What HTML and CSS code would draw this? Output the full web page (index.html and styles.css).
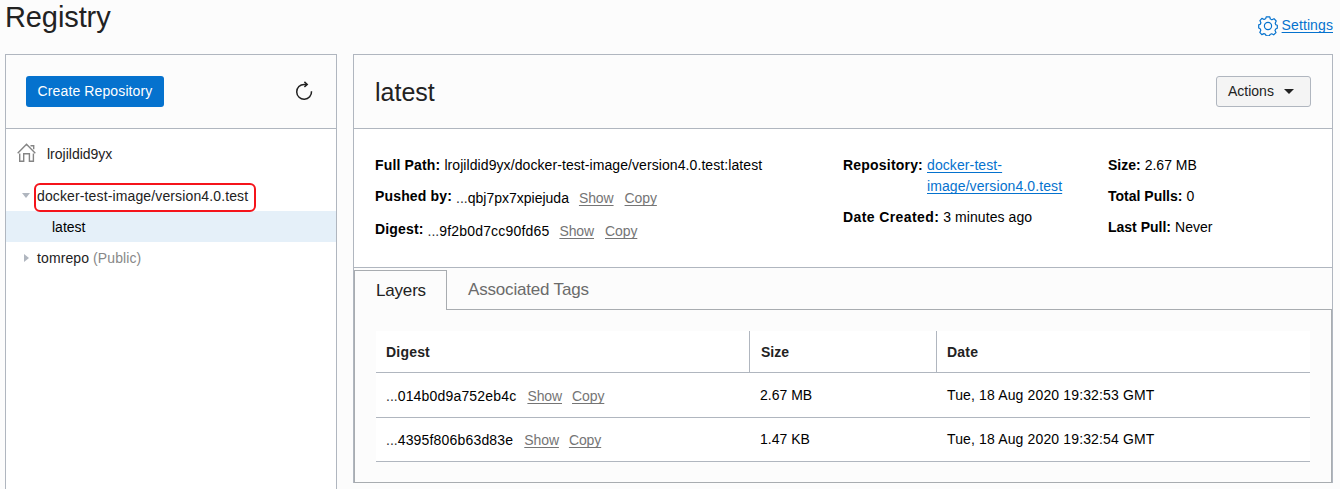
FILE: index.html
```html
<!DOCTYPE html>
<html lang="en">
<head>
<meta charset="utf-8">
<title>Registry</title>
<link rel="stylesheet" href="styles.css">
</head>
<body>
<header class="page-header">
  <h1 class="page-title">Registry</h1>
  <a class="settings">
    <svg class="gear" width="20" height="20" viewBox="0 0 20 20" fill="none" stroke="currentColor" stroke-width="1.2" stroke-linejoin="round"><path d="M8.2 .8h3.6l.5 2.2q1 .3 1.6.8l2.1-1.1 2.2 2.3-1 2.2.6 1.5 1.5.6v3l-1.6.7-.7 1.6 1 2-2.3 2.2-2-1-1.7.7-.6 1.4H8.2l-.7-1.6-1.6-.7-2.1 1-2-2.2 1-2.2-.6-1.5-1.5-.7V8.9l1.6-.7.6-1.5-1-2.1 2-2.2 2.2 1.1q.8-.5 1.6-.8z"/><circle cx="10" cy="10" r="3.6"/></svg>
    <span class="link">Settings</span>
  </a>
</header>
<div class="columns">
  <aside class="sidebar">
    <div class="panel-header sidebar-header">
      <button class="btn btn-primary">Create Repository</button>
      <svg class="refresh" width="18" height="20" viewBox="0 0 18 20" fill="none" stroke="#222" stroke-width="1.5"><path d="M16.5 10.2A7.4 7.4 0 1 1 9.2 3.4h2.5"/><path d="M9.4 .9l2.8 2.5-2.8 2.5"/></svg>
    </div>
    <div class="tree">
      <div class="tree-root">
        <svg class="home" width="19" height="19" viewBox="0 0 19 19" fill="none" stroke="#858585" stroke-width="1.4"><path d="M.7 10.2L9.5 1.2l8.800 9M13.500 2.700h3.200v3.500M2.700 10.500v7.700h4v-7.500h5.700v7.500h4v-7.700"/></svg>
        <span>lrojildid9yx</span>
      </div>
      <div class="tree-item">
        <span class="caret caret-open"></span><span class="tree-label highlighted">docker-test-image/version4.0.test</span>
      </div>
      <div class="tree-item tree-leaf">latest</div>
      <div class="tree-item tree-closed">
        <span class="caret caret-closed"></span><span class="tree-label">tomrepo <span class="muted">(Public)</span></span>
      </div>
    </div>
  </aside>
  <main class="main">
    <div class="panel-header main-header">
      <h2 class="image-title">latest</h2>
      <button class="btn btn-actions">Actions <span class="drop"></span></button>
    </div>
    <section class="details">
      <dl class="detail-col">
        <div class="field"><dt>Full Path:</dt><dd>lrojildid9yx/docker-test-image/version4.0.test:latest</dd></div>
        <div class="field field-hash"><dt>Pushed by:</dt><dd><span class="dots">...</span>qbj7px7xpiejuda<a class="act">Show</a><a class="act">Copy</a></dd></div>
        <div class="field field-hash"><dt>Digest:</dt><dd><span class="dots">...</span><span class="hash">9f2b0d7cc90fd65</span><a class="act">Show</a><a class="act">Copy</a></dd></div>
      </dl>
      <dl class="detail-col">
        <div class="field"><dt class="dt-wide">Repository:</dt><dd><a class="link repo-link">docker-test-<br>image/version4.0.test</a></dd></div>
        <div class="field"><dt class="dt-wider">Date Created:</dt><dd>3 minutes ago</dd></div>
      </dl>
      <dl class="detail-col detail-stats">
        <div class="field"><dt>Size:</dt><dd>2.67 MB</dd></div>
        <div class="field"><dt>Total Pulls:</dt><dd>0</dd></div>
        <div class="field"><dt>Last Pull:</dt><dd>Never</dd></div>
      </dl>
    </section>
    <nav class="tabs">
      <span class="tab tab-active">Layers</span>
      <span class="tab">Associated Tags</span>
    </nav>
    <section class="tab-body">
      <div class="table">
        <div class="row row-head"><span>Digest</span><span>Size</span><span>Date</span></div>
        <div class="row row-first"><span class="cell-hash"><span class="dots">...</span><span class="hash">014b0d9a752eb4c</span><a class="act">Show</a><a class="act">Copy</a></span><span>2.67 MB</span><span class="date">Tue, 18 Aug 2020 19:32:53 GMT</span></div>
        <div class="row"><span class="cell-hash"><span class="dots">...</span><span class="hash">4395f806b63d83e</span><a class="act">Show</a><a class="act">Copy</a></span><span>1.47 KB</span><span class="date">Tue, 18 Aug 2020 19:32:54 GMT</span></div>
      </div>
    </section>
  </main>
</div>
</body>
</html>
```
FILE: styles.css
```css
* { box-sizing: border-box; }
body {
  margin: 0;
  height: 489px;
  overflow: hidden;
  display: flex;
  flex-direction: column;
  background: #fcfcfc;
  color: #000;
  font: 14px/21px "Liberation Sans", Arial, sans-serif;
}
h1, h2, dl, dd { margin: 0; font-weight: normal; }
.page-header {
  flex: none;
  height: 54px;
  padding: 0 7px 0 5px;
  display: flex;
  justify-content: space-between;
}
.page-title { font-size: 29px; line-height: 34px; letter-spacing: -.1px; color: #222; }
.settings {
  display: flex;
  align-items: flex-start;
  gap: 4px;
  padding-top: 15px;
  color: #0572ce;
  letter-spacing: .1px;
}
.gear { margin-top: 1px; }
.link {
  color: #0572ce;
  text-decoration: underline;
  text-underline-offset: 2px;
  text-decoration-thickness: 1px;
  text-decoration-skip-ink: none;
}
.repo-link { letter-spacing: .1px; }
.columns { flex: 1; display: flex; gap: 16px; padding: 0 7px 0 5px; }
.sidebar {
  flex: none;
  width: 332px;
  border: 1px solid #b0b6bf;
  border-bottom: 0;
  background: #fff;
}
.panel-header {
  display: flex;
  align-items: center;
  justify-content: space-between;
  height: 74px;
  background: #fcfcfc;
  border-bottom: 1px solid #b0b6bf;
}
.sidebar-header { padding: 0 23px 0 20px; }
.refresh { margin-bottom: 2px; }
.btn {
  height: 31px;
  border-radius: 3px;
  font: inherit;
  line-height: 29px;
  padding: 0;
  text-align: center;
}
.btn-primary { width: 138px; border: 0; background: #0572ce; color: #fff; letter-spacing: .12px; }
.btn-actions {
  width: 95px;
  display: flex;
  align-items: center;
  gap: 10px;
  padding: 0 11px;
  border: 1px solid #b0b6bf;
  background: #f4f4f4;
  color: #222;
}
.drop { border: 5px solid transparent; border-top-color: #222; border-bottom: 0; }
.tree { padding-top: 15px; color: #222; }
.tree-root { display: flex; align-items: flex-start; gap: 11px; padding-left: 11px; height: 36px; }
.home { margin-top: -1px; }
.tree-item { display: flex; align-items: center; height: 31px; padding-left: 16px; }
.tree-leaf { padding: 2px 0 0 46px; background: #e5f0f9; color: #000; }
.tree-closed { padding-top: 2px; }
.tree-closed .tree-label { letter-spacing: .1px; }
.caret { flex: none; }
.caret-open { border: 4px solid transparent; border-top: 5px solid #b0b6bf; border-bottom: 0; }
.caret-closed { margin: -2px 1px 0 2px; border: 4px solid transparent; border-left: 5px solid #b0b6bf; border-right: 0; }
.tree-label { padding-left: 7px; }
.highlighted {
  height: 29px;
  width: 222px;
  margin: 4px 0 0 4px;
  padding: 1px 0 0 1px;
  border: 2px solid #f5141b;
  border-radius: 6px;
  letter-spacing: .13px;
}
.muted { color: #888; }
.main {
  flex: 1;
  height: 429px;
  border: 1px solid #b0b6bf;
  border-bottom: 0;
}
.main-header { padding: 0 21px; }
.image-title { font-size: 25px; line-height: 30px; color: #222; }
.details {
  display: grid;
  grid-template-columns: 468px 265px 1fr;
  height: 139px;
  padding: 26px 21px 0;
  background: #fff;
  border-bottom: 1px solid #b0b6bf;
}
.field { display: flex; gap: 4px; margin-bottom: 10px; }
.field dt { font-weight: bold; letter-spacing: .16px; }
.field .dt-wide { letter-spacing: .2px; }
.field .dt-wider { letter-spacing: .4px; }
.field dd { letter-spacing: .08px; }
.detail-stats .field dt, .detail-stats .field dd { letter-spacing: 0; }
.field-hash { margin-bottom: 12px; }
.field-hash dd { position: relative; top: 2px; letter-spacing: 0; }
.dots { color: #333; }
.hash { letter-spacing: .18px; }
.act {
  margin-left: 10px;
  color: #757575;
  letter-spacing: -.1px;
  text-decoration: underline;
  text-underline-offset: 2px;
  text-decoration-thickness: 1px;
  text-decoration-skip-ink: none;
}
.act + .act { margin-left: 11px; }
.tabs {
  display: flex;
  height: 42px;
  padding-top: 2px;
  font-size: 17px;
  line-height: 40px;
  letter-spacing: -.18px;
  color: #6b6b6b;
}
.tab { flex: 1; padding-left: 21px; border-bottom: 1px solid #a8acb0; }
.tab-active {
  flex: none;
  width: 93px;
  border: 1px solid #a8acb0;
  border-bottom: 0;
  color: #222;
}
.tab-body {
  height: 173px;
  padding: 21px 21px 0;
  border: 1px solid #a8acb0;
  border-top: 0;
}
.table { background: #fff; }
.row {
  display: grid;
  grid-template-columns: 374px 187px 1fr;
  height: 44px;
  line-height: 43px;
  border-bottom: 1px solid #b0b6bf;
}
.row > span { padding-left: 10px; }
.row > .cell-hash { padding-top: 1px; }
.cell-hash .act { margin-left: 11px; }
.cell-hash .act + .act { margin-left: 10px; }
.date { letter-spacing: .14px; }
.row-first { height: 45px; line-height: 45px; }
.row-head { height: 42px; line-height: 42px; font-weight: bold; letter-spacing: .2px; color: #222; }
.row-head > span:nth-child(2) { padding-left: 11px; letter-spacing: 0; }
.row-head > span:not(:last-child) { border-right: 1px solid #b0b6bf; }
```
